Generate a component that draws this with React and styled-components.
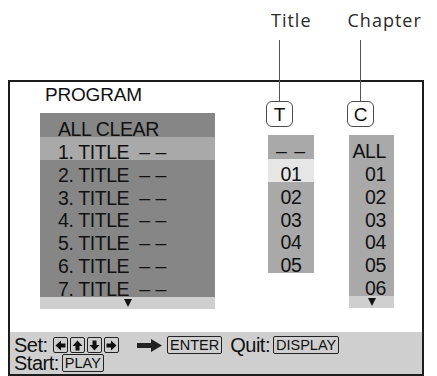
import React from "react";
import styled, { createGlobalStyle } from "styled-components";

const GlobalStyle = createGlobalStyle`
  html, body { margin: 0; padding: 0; background: #fff; }
  body { font-family: "Liberation Sans", Arial, sans-serif; color: #111; }
`;

const Page = styled.div`
  width: 437px;
  height: 376px;
  overflow: hidden;
`;

const Header = styled.div`
  height: 80px;
  box-sizing: border-box;
  display: flex;
  gap: 36px;
  padding: 8px 0 0 271px;
`;

const Label = styled.span`
  font-family: "Open Sans", sans-serif;
  font-size: 18px;
  line-height: 24px;
  letter-spacing: 1px;
  color: #2a2a2a;
`;

const Frame = styled.div`
  margin-left: 8px;
  width: 416px;
  height: 296px;
  box-sizing: border-box;
  border: 2px solid #1c1c1c;
  display: flex;
  flex-direction: column;
`;

const Main = styled.div`
  flex: 1;
  display: flex;
  padding-left: 30px;
`;

const LeftCol = styled.div`
  width: 175px;
  display: flex;
  flex-direction: column;
`;

const Heading = styled.div`
  font-size: 19px;
  line-height: 22px;
  padding: 2px 0 0 5px;
  letter-spacing: -0.2px;
`;

const Panel = styled.div`
  margin-top: ${(p) => p.$mt || 0}px;
  background: ${(p) => p.$bg};
  display: flex;
  flex-direction: column;
`;

const Rows = styled.div`
  height: ${(p) => (p.$h ? `${p.$h}px` : "auto")};
  overflow: hidden;
  padding-top: 1px;
  box-sizing: border-box;
`;

const Row = styled.div`
  height: 22.86px;
  box-sizing: border-box;
  padding: 6px ${(p) => p.$pr || 0}px 0 ${(p) => p.$pl || 0}px;
  font-size: 19.5px;
  line-height: 19px;
  letter-spacing: -0.4px;
  white-space: nowrap;
  text-align: ${(p) => p.$align || "left"};
  background: ${(p) => p.$hl || "transparent"};
`;

const Dashes = styled.span`
  margin-left: ${(p) => p.$ml || 0}px;
  letter-spacing: ${(p) => p.$ls || 0}px;
`;

const Strip = styled.div`
  height: 12px;
  background: #cfcfcf;
  display: flex;
  justify-content: center;
  align-items: center;
`;

const DownTri = styled.div`
  width: 0;
  height: 0;
  border-left: 4px solid transparent;
  border-right: 4px solid transparent;
  border-top: 8px solid #111;
`;

const SideCol = styled.div`
  margin-left: ${(p) => p.$ml}px;
  width: ${(p) => p.$w}px;
  padding-top: 19px;
  display: flex;
  flex-direction: column;
`;

const Badge = styled.div`
  position: relative;
  margin-left: -2px;
  width: 27px;
  height: 26px;
  box-sizing: border-box;
  border: 1.5px solid #4a4a4a;
  border-radius: 6px;
  display: flex;
  align-items: center;
  justify-content: center;
  font-size: 19px;
  line-height: 19px;
  &::before {
    content: "";
    position: absolute;
    left: calc(50% - 0.75px);
    bottom: calc(100% + 1.5px);
    width: 1.5px;
    height: 61px;
    background: #555;
  }
`;

const Bar = styled.div`
  height: 42px;
  box-sizing: border-box;
  background: #cfcfcf;
  padding: 4px 0 0 4px;
  font-size: 20px;
  letter-spacing: -0.5px;
`;

const BarLine = styled.div`
  display: flex;
  align-items: center;
  height: 18px;
  line-height: 18px;
  white-space: nowrap;
`;

const Keys = styled.div`
  display: flex;
  gap: 1.5px;
  margin-left: 5px;
`;

const Key = styled.div`
  width: 15.5px;
  height: 16px;
  box-sizing: border-box;
  border: 1.5px solid #222;
  border-radius: 2px;
  display: flex;
  align-items: center;
  justify-content: center;
  svg { transform: rotate(${(p) => p.$rot}deg); }
`;

const Tag = styled.span`
  margin-left: ${(p) => p.$ml || 0}px;
  height: 18px;
  box-sizing: border-box;
  border: 1.5px solid #222;
  border-radius: 2px;
  padding: 0 2px;
  font-size: 14.5px;
  line-height: 15px;
  letter-spacing: 0;
  display: flex;
  align-items: center;
`;

const Word = styled.span`
  margin-left: ${(p) => p.$ml || 0}px;
`;

const BigArrow = styled.svg`
  margin-left: 18px;
`;

const KeyArrow = () => (
  <svg width="11" height="11" viewBox="0 0 11 11">
    <polygon points="0.5,5.5 6,0.5 6,3.5 10.5,3.5 10.5,7.5 6,7.5 6,10.5" fill="#111" />
  </svg>
);

const titles = [1, 2, 3, 4, 5, 6, 7];

export default function App() {
  return (
    <Page>
      <GlobalStyle />
      <Header>
        <Label>Title</Label>
        <Label>Chapter</Label>
      </Header>
      <Frame>
        <Main>
          <LeftCol>
            <Heading>PROGRAM</Heading>
            <Panel $mt={7} $bg="#868686">
              <Rows $h={184}>
                <Row $pl={18}>ALL CLEAR</Row>
                {titles.map((n) => (
                  <Row key={n} $pl={18} $hl={n === 1 ? "#a9a9a9" : undefined}>
                    {n}. TITLE
                    <Dashes $ml={10}>– –</Dashes>
                  </Row>
                ))}
              </Rows>
              <Strip>
                <DownTri />
              </Strip>
            </Panel>
          </LeftCol>

          <SideCol $ml={53} $w={46}>
            <Badge>T</Badge>
            <Panel $mt={8} $bg="#a9a9a9">
              <Rows>
                <Row $align="center">
                  <Dashes $ls={1}>– –</Dashes>
                </Row>
                <Row $align="center" $hl="#e6e6e6">01</Row>
                <Row $align="center">02</Row>
                <Row $align="center">03</Row>
                <Row $align="center">04</Row>
                <Row $align="center">05</Row>
              </Rows>
            </Panel>
          </SideCol>

          <SideCol $ml={35} $w={45}>
            <Badge>C</Badge>
            <Panel $mt={8} $bg="#a9a9a9">
              <Rows $h={161}>
                <Row $align="right" $pr={8}>ALL</Row>
                {["01", "02", "03", "04", "05", "06"].map((c) => (
                  <Row key={c} $align="right" $pr={8}>
                    {c}
                  </Row>
                ))}
              </Rows>
              <Strip>
                <DownTri />
              </Strip>
            </Panel>
          </SideCol>
        </Main>

        <Bar>
          <BarLine>
            <span>Set:</span>
            <Keys>
              <Key $rot={0}><KeyArrow /></Key>
              <Key $rot={90}><KeyArrow /></Key>
              <Key $rot={-90}><KeyArrow /></Key>
              <Key $rot={180}><KeyArrow /></Key>
            </Keys>
            <BigArrow width="25" height="13" viewBox="0 0 25 13">
              <polygon points="0,4 14,4 14,0 25,6.5 14,13 14,9 0,9" fill="#222" />
            </BigArrow>
            <Tag $ml={5}>ENTER</Tag>
            <Word $ml={8}>Quit:</Word>
            <Tag $ml={3}>DISPLAY</Tag>
          </BarLine>
          <BarLine>
            <span>Start:</span>
            <Tag $ml={3}>PLAY</Tag>
          </BarLine>
        </Bar>
      </Frame>
    </Page>
  );
}
